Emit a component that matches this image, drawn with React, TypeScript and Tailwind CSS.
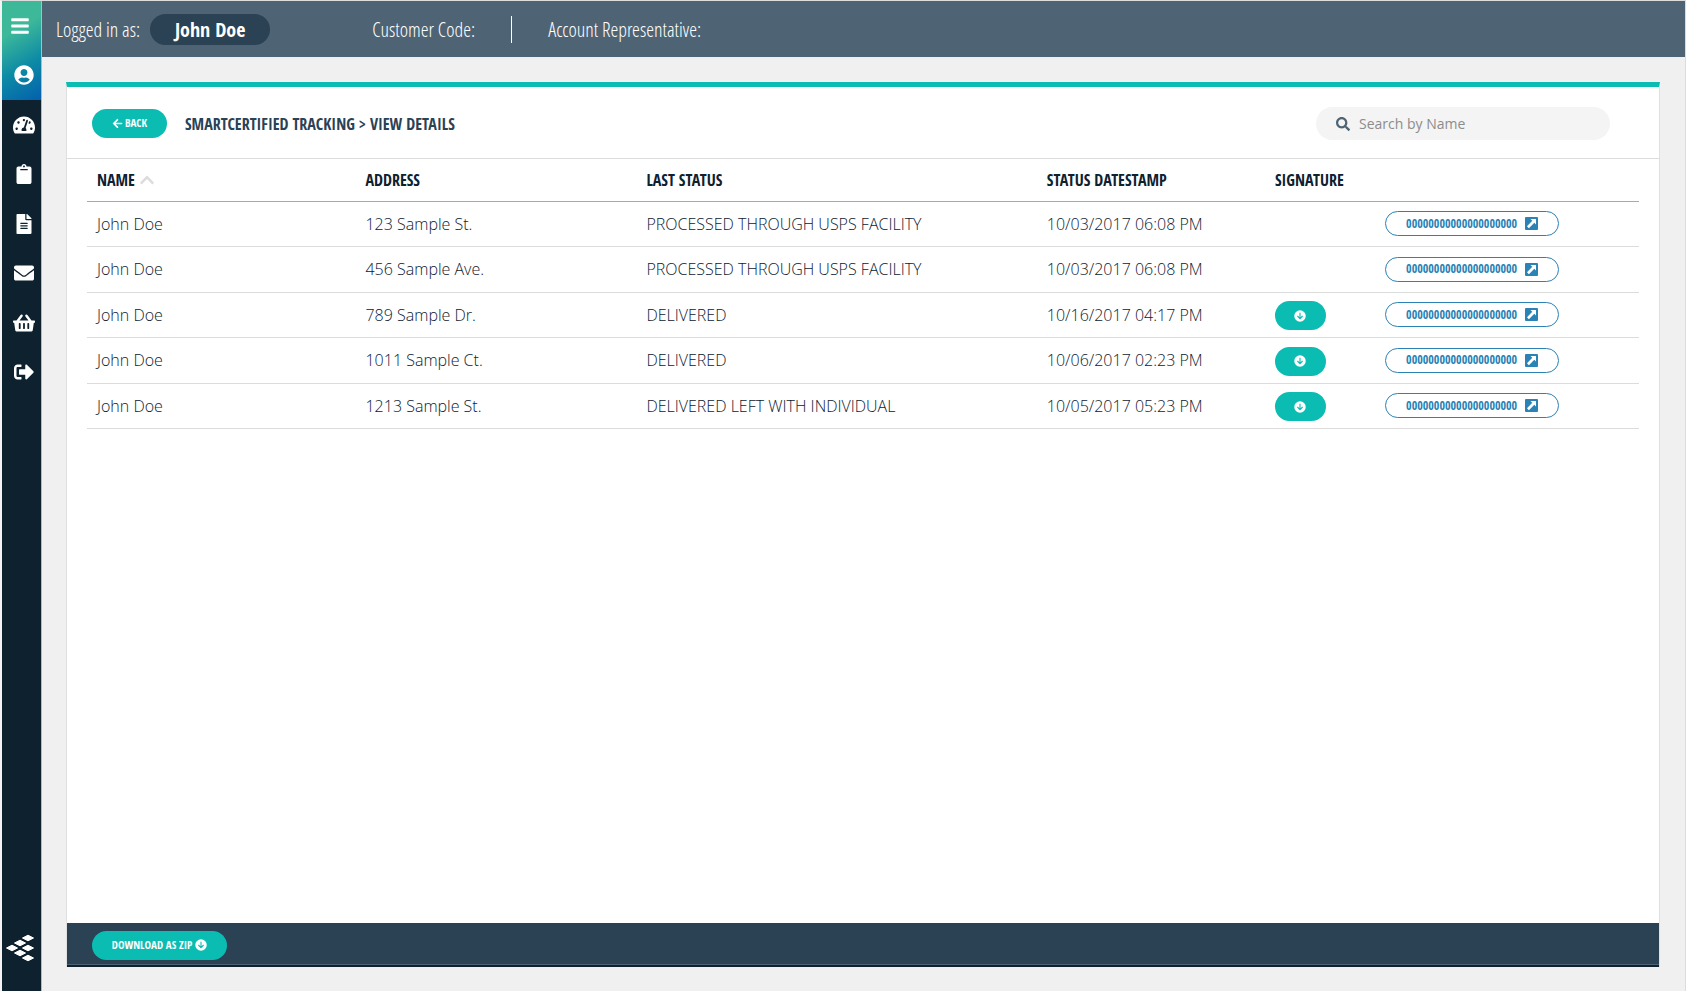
import React from "react";
import {
  FaArrowLeft,
  FaBars,
  FaChevronUp,
  FaClipboard,
  FaEnvelope,
  FaFileAlt,
  FaSearch,
  FaShoppingBasket,
  FaSignOutAlt,
  FaTachometerAlt,
  FaUserCircle,
} from "react-icons/fa";

const condensed = "font-['Open_Sans_Condensed',sans-serif]";
const condensedLight = "font-['Open_Sans_Condensed_Light','Open_Sans_Condensed',sans-serif]";

interface Shipment {
  name: string;
  address: string;
  status: string;
  datestamp: string;
  signed: boolean;
  tracking: string;
}

const shipments: Shipment[] = [
  { name: "John Doe", address: "123 Sample St.", status: "PROCESSED THROUGH USPS FACILITY", datestamp: "10/03/2017 06:08 PM", signed: false, tracking: "00000000000000000000" },
  { name: "John Doe", address: "456 Sample Ave.", status: "PROCESSED THROUGH USPS FACILITY", datestamp: "10/03/2017 06:08 PM", signed: false, tracking: "00000000000000000000" },
  { name: "John Doe", address: "789 Sample Dr.", status: "DELIVERED", datestamp: "10/16/2017 04:17 PM", signed: true, tracking: "00000000000000000000" },
  { name: "John Doe", address: "1011 Sample Ct.", status: "DELIVERED", datestamp: "10/06/2017 02:23 PM", signed: true, tracking: "00000000000000000000" },
  { name: "John Doe", address: "1213 Sample St.", status: "DELIVERED LEFT WITH INDIVIDUAL", datestamp: "10/05/2017 05:23 PM", signed: true, tracking: "00000000000000000000" },
];

const links = [
  { label: "Dashboard", Icon: FaTachometerAlt, size: "size-[22px]" },
  { label: "Orders", Icon: FaClipboard, size: "size-5" },
  { label: "Documents", Icon: FaFileAlt, size: "size-5" },
  { label: "Mail", Icon: FaEnvelope, size: "size-5" },
  { label: "Shop", Icon: FaShoppingBasket, size: "size-[22px]" },
  { label: "Sign out", Icon: FaSignOutAlt, size: "size-5" },
];

function DownloadIcon() {
  return (
    <svg viewBox="0 0 24 24" className="size-3 shrink-0" aria-hidden="true">
      <circle cx="12" cy="12" r="11.5" fill="#fff" />
      <path d="M12 5.5V17M6.8 12L12 17.2L17.2 12" fill="none" stroke="#0bbcb3" strokeWidth="2.2" />
    </svg>
  );
}

function ExternalIcon() {
  return (
    <svg viewBox="0 0 26 26" className="size-[13px] shrink-0" aria-hidden="true">
      <rect width="26" height="26" rx="2" fill="#2b82b5" />
      <path d="M11 4H22V15L18.6 11.6L7.8 22.4L4 18.6L14.6 7.6Z" fill="#fff" />
    </svg>
  );
}

function Logo() {
  const tiles = [
    [22, 4],
    [14, 9],
    [6, 14],
    [22, 14],
    [14, 19],
    [22, 24],
  ];
  return (
    <svg viewBox="0 0 30 28" className="h-[28px] w-[30px]" fill="#fff" stroke="#fff" strokeLinejoin="round" aria-hidden="true">
      {tiles.map(([x, y]) => (
        <path key={`${x}-${y}`} d={`M${x - 5.5} ${y}L${x} ${y - 2.8}L${x + 5.5} ${y}L${x} ${y + 2.8}Z`} />
      ))}
    </svg>
  );
}

function Sidebar() {
  return (
    <nav aria-label="Main" className="flex w-10 shrink-0 flex-col border-r border-[#b3babf] bg-[#0d212f] text-white">
      <div className="flex h-[99px] flex-col bg-linear-[150deg,#3db99a_30%,#0d8aa5_65%,#0460ad]">
        <button type="button" aria-label="Menu" className="flex h-[49px] items-center pl-2">
          <FaBars className="size-5" />
        </button>
        <a href="#account" aria-label="Account" className="flex h-[49px] items-center justify-center pl-1">
          <FaUserCircle className="size-5" />
        </a>
      </div>
      <div className="flex h-[297px] flex-col">
        {links.map(({ label, Icon, size }) => (
          <a key={label} href="#" aria-label={label} className="flex flex-1 items-center justify-center pl-1">
            <Icon className={size} />
          </a>
        ))}
      </div>
      <a href="#" aria-label="Home" className="mt-auto mb-[29px] pl-1">
        <Logo />
      </a>
    </nav>
  );
}

function TopBar() {
  return (
    <header className={`${condensedLight} flex h-14 items-center bg-[#4e6474] pt-px pl-[14px] text-[20px] font-light text-white`}>
      <span>Logged in as:</span>
      <span className={`${condensed} ml-[10px] flex h-[31px] w-[120px] items-center justify-center rounded-full bg-[#2b4154] font-bold`}>John Doe</span>
      <span className="ml-[102px]">Customer Code:</span>
      <span className="mx-9 h-[27px] w-px bg-white" />
      <span>Account Representative:</span>
    </header>
  );
}

const headings = ["ADDRESS", "LAST STATUS", "STATUS DATESTAMP", "SIGNATURE"];

function ShipmentTable() {
  return (
    <table className="h-[270px] w-full table-fixed border-collapse text-left">
      <colgroup>
        <col className="w-[17.3%]" />
        <col className="w-[18.1%]" />
        <col className="w-[25.8%]" />
        <col className="w-[14.7%]" />
        <col className="w-[7.1%]" />
        <col />
      </colgroup>
      <thead>
        <tr className={`${condensed} h-[42px] border-b border-[#6cc5b9] text-[16px] text-[#0d212f]`}>
          <th scope="col" aria-sort="ascending" className="px-[10px] font-bold">
            <button type="button" className="flex items-center gap-1">
              NAME
              <FaChevronUp className="size-4 text-[#dcdcdc]" />
            </button>
          </th>
          {headings.map((heading) => (
            <th key={heading} scope="col" className="px-[10px] font-bold whitespace-nowrap">
              {heading}
            </th>
          ))}
          <td />
        </tr>
      </thead>
      <tbody className="text-[16px] font-light text-[#0d212f]">
        {shipments.map((row) => (
          <tr key={row.address} className="h-[45px] border-b border-[#dcdcdc]">
            <td className="px-[10px]">{row.name}</td>
            <td className="px-[10px]">{row.address}</td>
            <td className="px-[10px]">{row.status}</td>
            <td className="px-[10px]">{row.datestamp}</td>
            <td className="px-[10px] pt-[2px]">
              {row.signed && (
                <button type="button" aria-label="Download signature" className="flex h-[29px] w-[51px] items-center justify-center rounded-full bg-[#0bbcb3] text-white">
                  <DownloadIcon />
                </button>
              )}
            </td>
            <td className="px-[10px]">
              <a href="#" className={`${condensed} flex h-[25px] w-[174px] items-center justify-center gap-2 rounded-full border border-[#2b82b5] text-[12px] font-bold text-[#2b82b5]`}>
                {row.tracking}
                <ExternalIcon />
              </a>
            </td>
          </tr>
        ))}
      </tbody>
    </table>
  );
}

export default function App() {
  return (
    <div className="flex min-h-screen border-t border-l-2 border-t-[#dcdcdc] border-l-[#f4f4f4] bg-[#f0f0f0] font-['Open_Sans',sans-serif]">
      <Sidebar />
      <div className="flex min-w-0 grow flex-col border-r border-[#dcdcdc]">
        <TopBar />
        <main className="mt-[25px] mr-[25px] mb-6 ml-6 flex grow flex-col border-x border-t-[5px] border-x-[#e0e0e0] border-t-[#0bbcb3] bg-white">
          <div className="flex h-[72px] shrink-0 items-center border-b border-[#dcdcdc] pt-[2px] pr-[49px] pl-[25px]">
            <button type="button" className={`${condensed} flex h-[29px] w-[75px] items-center justify-center gap-[2px] rounded-full bg-[#0bbcb3] text-[11px] font-bold text-white`}>
              <FaArrowLeft className="size-[11px]" />
              BACK
            </button>
            <h1 className={`${condensed} ml-[18px] text-[16px] font-bold text-[#2b4154]`}>SMARTCERTIFIED TRACKING &gt; VIEW DETAILS</h1>
            <label className="ml-auto flex h-[33px] w-[294px] items-center gap-[9px] rounded-full bg-[#f4f4f4] px-5 text-[14px]">
              <FaSearch className="size-[14px] shrink-0 text-[#4e6474]" />
              <input type="search" aria-label="Search by Name" placeholder="Search by Name" className="w-full min-w-0 bg-transparent outline-none placeholder:text-[#8c8c8c]" />
            </label>
          </div>
          <div className="px-5">
            <ShipmentTable />
          </div>
          <footer className="mt-auto border-b-2 border-[#0d212f] bg-[#2b4154]">
            <div className="flex h-[42px] items-center border-b border-[#4e6474] pt-[3px] pl-[25px]">
              <button type="button" className={`${condensed} flex h-[29px] w-[135px] items-center justify-center gap-[3px] rounded-full bg-[#0bbcb3] text-[11px] font-bold text-white`}>
                DOWNLOAD AS ZIP
                <DownloadIcon />
              </button>
            </div>
          </footer>
        </main>
      </div>
    </div>
  );
}
